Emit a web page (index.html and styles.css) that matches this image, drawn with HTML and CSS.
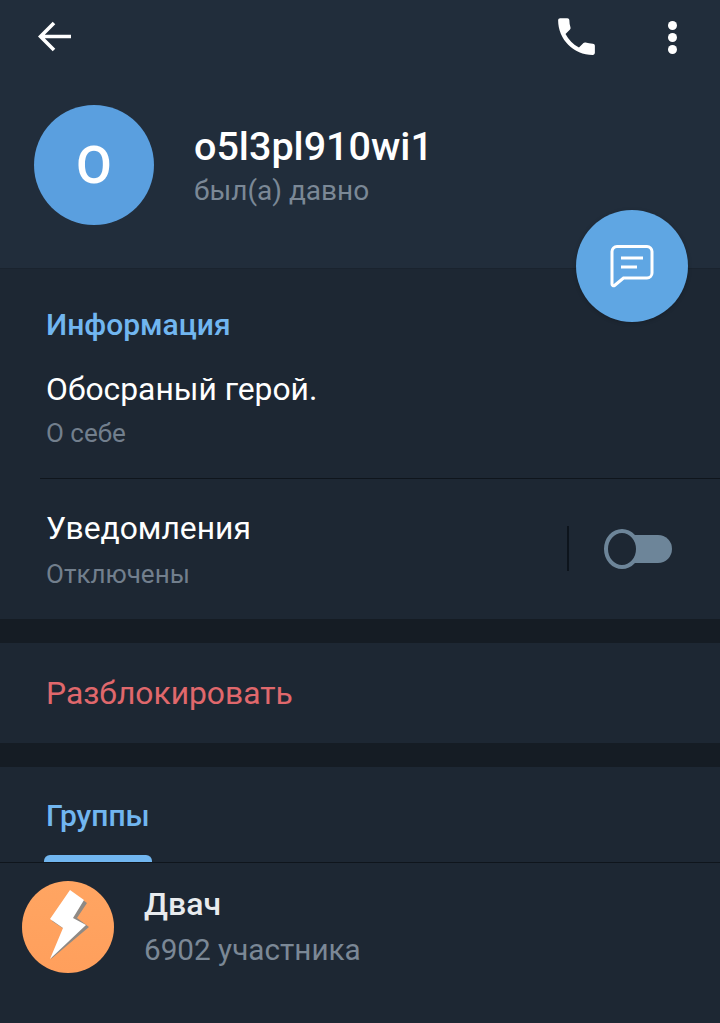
FILE: index.html
```html
<!DOCTYPE html>
<html lang="ru">
<head>
    <meta charset="UTF-8">
    <meta name="viewport" content="width=device-width, initial-scale=1.0">
    <title>o5l3pl910wi1</title>
    <link rel="stylesheet" href="styles.css">
</head>
<body>
    <!-- шапка профиля -->
    <header class="header">
        <div class="topbar">
            <svg class="icon-back" viewBox="0 0 34 32" width="34" height="32">
                <path d="M33 15.500H3M16 2 2.500 15.500 16 29" fill="none" stroke="#fff" stroke-width="3.600"/>
            </svg>
            <svg class="icon-phone" viewBox="0 0 24 24" width="49" height="49">
                <path fill="#fff" d="M6.620 10.790c1.440 2.830 3.760 5.140 6.590 6.590l2.200-2.200c.270-.270.670-.360 1.020-.240 1.120.370 2.330.570 3.570.570.550 0 1 .450 1 1V20c0 .550-.450 1-1 1-9.390 0-17-7.610-17-17 0-.550.450-1 1-1h3.500c.550 0 1 .450 1 1 0 1.250.200 2.450.570 3.570.110.350.030.740-.250 1.020l-2.200 2.200z"/>
            </svg>
            <div class="icon-dots"><span></span><span></span><span></span></div>
        </div>
        <div class="profile">
            <div class="avatar">O</div>
            <div class="profile-text">
                <div class="name">o5l3pl910wi1</div>
                <div class="status">был(а) давно</div>
            </div>
        </div>
        <div class="fab">
            <svg viewBox="0 0 44 44" width="44" height="44">
                <path d="M7 2.500H37a5 5 0 0 1 5 5V29a5 5 0 0 1-5 5H13.500L4.500 41.500c-1 .800-2.500 0-2.500-1.200V7.500a5 5 0 0 1 5-5z" fill="none" stroke="#fff" stroke-width="3"/>
                <path d="M11 14H33M11 23H27" fill="none" stroke="#fff" stroke-width="3"/>
            </svg>
        </div>
    </header>

    <!-- информация -->
    <section class="section info">
        <div class="section-title">Информация</div>
        <div class="row-about">
            <div class="row-main">Обосраный герой.</div>
            <div class="row-sub">О себе</div>
        </div>
        <div class="notify">
            <div class="notify-text">
                <div class="row-main">Уведомления</div>
                <div class="row-sub">Отключены</div>
            </div>
            <div class="notify-divider"></div>
            <div class="switch"><span class="switch-knob"></span></div>
        </div>
    </section>

    <section class="section unblock">Разблокировать</section>

    <!-- группы -->
    <section class="section groups">
        <div class="section-title">Группы</div>
        <div class="tab-line"></div>
    </section>

    <div class="group">
        <svg class="group-avatar" viewBox="0 0 92 92" width="92" height="92">
            <defs>
                <linearGradient id="orange" x1="0" y1="0" x2="0" y2="1">
                    <stop offset="0" stop-color="#ffa562"/>
                    <stop offset="1" stop-color="#ff9f5c"/>
                </linearGradient>
            </defs>
            <circle cx="46" cy="46" r="46" fill="url(#orange)"/>
            <path fill="#8f8a85" d="M50 11 65 22 55 37 67 46 29 78 42 48 30 40z"/>
            <path fill="#fff" d="M48 9 62 19 51 37 64 44 28 78 41 47 28 38z"/>
        </svg>
        <div class="group-text">
            <div class="group-name">Двач</div>
            <div class="group-sub">6902 участника</div>
        </div>
    </div>
</body>
</html>
```

FILE: styles.css
```css
body {
    margin: 0;
    height: 1023px;
    overflow: hidden;
    font-family: 'Roboto', sans-serif;
    background-color: #1d2733;
    color: #fff;
}

/* шапка */
.header {
    position: relative;
    height: 268px;
    background-color: #212d3b;
    border-bottom: 1px solid #1a232e;
}

.topbar {
    display: flex;
    align-items: center;
    height: 74px;
    padding-left: 38px;
}

.icon-back {
    margin-right: auto;
}

.icon-phone {
    margin-right: 67px;
    margin-top: -1px;
}

.icon-dots {
    display: flex;
    flex-direction: column;
    gap: 3px;
    margin-right: 43px;
}

.icon-dots span {
    display: block;
    width: 9px;
    height: 9px;
    border-radius: 50%;
    background-color: #fff;
}

.profile {
    display: flex;
    align-items: center;
    gap: 40px;
    margin-top: 31px;
    padding-left: 34px;
}

.avatar {
    display: flex;
    align-items: center;
    justify-content: center;
    width: 120px;
    height: 120px;
    border-radius: 50%;
    background-color: #5a9fdf;
    font-size: 52px;
    font-weight: 500;
}

.profile-text {
    margin-top: 2px;
}

.name {
    font-size: 39.5px;
    font-weight: 500;
    line-height: 46px;
}

.status {
    font-size: 28px;
    line-height: 34px;
    margin-top: 4px;
    color: #7b8896;
}

.fab {
    position: absolute;
    top: 210px;
    left: 576px;
    display: flex;
    align-items: center;
    justify-content: center;
    width: 112px;
    height: 112px;
    border-radius: 50%;
    background-color: #5fa6e3;
    box-shadow: 0 1px 4px rgba(0, 0, 0, 0.2);
}

/* секции */
.section {
    background-color: #1d2733;
    border-bottom: 24px solid #151c24;
}

.section-title {
    font-size: 30px;
    font-weight: 500;
    line-height: 34px;
    color: #71b6f0;
}

.info {
    padding-top: 39px;
    padding-left: 46px;
    height: 311px;
}

.row-main {
    font-size: 31.8px;
    line-height: 36px;
}

.row-sub {
    font-size: 26px;
    line-height: 30px;
    margin-top: 11px;
    color: #727f8d;
}

.row-about {
    height: 107px;
    padding-top: 29px;
    margin-left: -6px;
    padding-left: 6px;
    border-bottom: 1px solid #0f151c;
}

.notify {
    display: flex;
    align-items: center;
    padding-top: 31px;
}

.notify .row-sub {
    margin-top: 13px;
}

.notify-text {
    width: 522px;
    margin-bottom: -2px;
}

.notify-divider {
    width: 2px;
    height: 45px;
    margin-left: -1px;
    background-color: #0d141c;
}

.switch {
    position: relative;
    width: 60px;
    height: 28px;
    margin-left: 43px;
    border-radius: 14px;
    background-color: #6d8599;
}

.switch-knob {
    position: absolute;
    top: -6px;
    left: -8px;
    box-sizing: border-box;
    width: 36px;
    height: 40px;
    border: 4px solid #6d8599;
    border-radius: 50%;
    background-color: #1d2733;
}

.unblock {
    height: 100px;
    padding-left: 46px;
    line-height: 100px;
    font-size: 31.8px;
    color: #e0686c;
}

.groups {
    height: 95px;
    border-bottom: 1px solid #0f151c;
    padding-left: 46px;
    display: flex;
    flex-direction: column;
    justify-content: space-between;
}

.groups .section-title {
    padding-top: 32px;
}

.tab-line {
    width: 108px;
    height: 7px;
    margin-left: -2px;
    border-radius: 6px 6px 0 0;
    background-color: #71b6f0;
}

/* группа */
.group {
    display: flex;
    align-items: center;
    gap: 30px;
    padding: 18px 0 0 22px;
}

.group-text {
    margin-top: -1px;
}

.group-name {
    font-size: 32px;
    font-weight: 500;
    line-height: 36px;
    color: #e8ebee;
}

.group-sub {
    font-size: 29.7px;
    line-height: 34px;
    margin-top: 11px;
    color: #7b8896;
}
```
